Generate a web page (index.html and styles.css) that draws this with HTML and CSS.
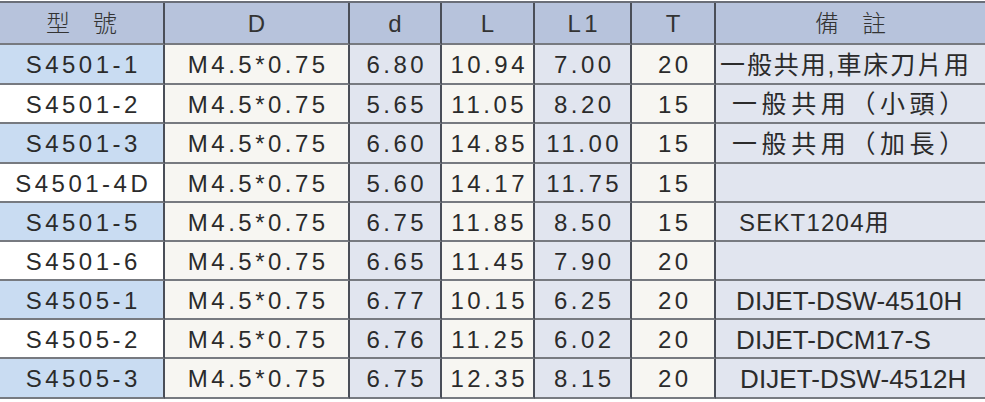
FILE: index.html
```html
<!DOCTYPE html>
<html>
<head>
<meta charset="utf-8">
<link rel="stylesheet" href="styles.css">
</head>
<body>
<div class="sheet">
  <div class="cell head cjk">型號</div>
  <div class="cell head">D</div>
  <div class="cell head">d</div>
  <div class="cell head">L</div>
  <div class="cell head">L1</div>
  <div class="cell head">T</div>
  <div class="cell head last cjk">備註</div>

  <div class="cell no blue">S4501-1</div><div class="cell cream">M4.5*0.75</div><div class="cell lav">6.80</div><div class="cell cream">10.94</div><div class="cell lav">7.00</div><div class="cell cream">20</div><div class="cell lav last rem cjk tight">一般共用,車床刀片用</div>
  <div class="cell no">S4501-2</div><div class="cell cream">M4.5*0.75</div><div class="cell lav">5.65</div><div class="cell cream">11.05</div><div class="cell lav">8.20</div><div class="cell cream">15</div><div class="cell lav last rem cjk">一般共用（小頭）</div>
  <div class="cell no blue">S4501-3</div><div class="cell cream">M4.5*0.75</div><div class="cell lav">6.60</div><div class="cell cream">14.85</div><div class="cell lav">11.00</div><div class="cell cream">15</div><div class="cell lav last rem cjk">一般共用（加長）</div>
  <div class="cell no">S4501-4D</div><div class="cell cream">M4.5*0.75</div><div class="cell lav">5.60</div><div class="cell cream">14.17</div><div class="cell lav">11.75</div><div class="cell cream">15</div><div class="cell lav last rem"></div>
  <div class="cell no blue">S4501-5</div><div class="cell cream">M4.5*0.75</div><div class="cell lav">6.75</div><div class="cell cream">11.85</div><div class="cell lav">8.50</div><div class="cell cream">15</div><div class="cell lav last rem sekt">SEKT1204用</div>
  <div class="cell no">S4501-6</div><div class="cell cream">M4.5*0.75</div><div class="cell lav">6.65</div><div class="cell cream">11.45</div><div class="cell lav">7.90</div><div class="cell cream">20</div><div class="cell lav last rem"></div>
  <div class="cell no blue">S4505-1</div><div class="cell cream">M4.5*0.75</div><div class="cell lav">6.77</div><div class="cell cream">10.15</div><div class="cell lav">6.25</div><div class="cell cream">20</div><div class="cell lav last rem dijet">DIJET-DSW-4510H</div>
  <div class="cell no">S4505-2</div><div class="cell cream">M4.5*0.75</div><div class="cell lav">6.76</div><div class="cell cream">11.25</div><div class="cell lav">6.02</div><div class="cell cream">20</div><div class="cell lav last rem dijet">DIJET-DCM17-S</div>
  <div class="cell no blue">S4505-3</div><div class="cell cream">M4.5*0.75</div><div class="cell lav">6.75</div><div class="cell cream">12.35</div><div class="cell lav">8.15</div><div class="cell cream">20</div><div class="cell lav last rem dijet d3">DIJET-DSW-4512H</div>
</div>
</body>
</html>
```

FILE: styles.css
```css
html, body {
  margin: 0;
  padding: 0;
  background: #ffffff;
}

.sheet {
  margin-top: 1px;
  width: 985px;
  display: grid;
  grid-template-columns: 165px 185px 92px 93px 97px 84px 269px;
  grid-template-rows: 42px 40px 39px 40px 39px 39px 39px 39px 39px 40px;
  border-top: 2px solid #6a6e78;
  font-family: "Liberation Sans", Arial, "Noto Sans CJK TC", sans-serif;
  color: #2b2b2b;
}

.cell {
  display: flex;
  align-items: center;
  justify-content: center;
  border-right: 2px solid #4a4e58;
  border-bottom: 2px solid #777a80;
  font-size: 24px;
  letter-spacing: 3.5px;
  text-indent: 3.5px;
  line-height: 1;
  white-space: nowrap;
  overflow: hidden;
}

.cell.last {
  border-right: none;
}

.head {
  background: #b7c3dc;
  color: #333;
  font-size: 24px;
  padding-top: 2px;
}

.cjk {
  font-family: "Liberation Sans", "Noto Sans CJK TC", sans-serif;
}

.head.cjk {
  letter-spacing: 23px;
  text-indent: 23px;
  font-weight: 300;
}

.no {
  background: #ffffff;
  padding-top: 2px;
}

.no.blue {
  background: #c9dcf2;
}

.cream {
  background: #f7f6f2;
  padding-top: 2px;
}

.lav {
  background: #e1e5ef;
  padding-top: 2px;
}

.rem {
  justify-content: flex-start;
  padding-left: 16px;
  text-indent: 0;
  font-size: 25px;
  letter-spacing: 4.6px;
}

.rem.tight {
  padding-left: 4px;
  letter-spacing: 1.9px;
}

.sekt {
  font-size: 24px;
  letter-spacing: 1.2px;
  padding-left: 23px;
}

.dijet {
  font-size: 26px;
  letter-spacing: 0.1px;
  padding-left: 20px;
}

.dijet.d3 {
  padding-left: 24px;
}
```
